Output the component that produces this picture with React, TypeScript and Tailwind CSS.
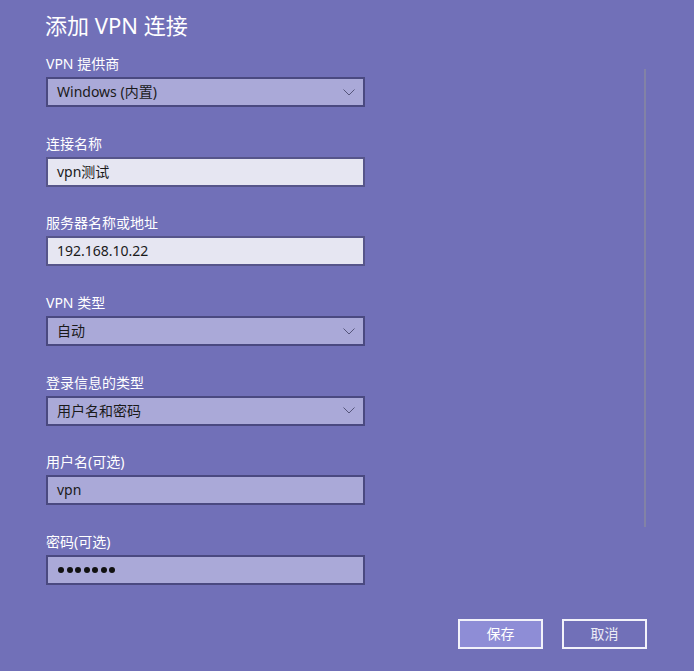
import React from "react";

const font = { fontFamily: '"Noto Sans", "Noto Sans CJK SC", sans-serif' };

function Chevron() {
  return (
    <svg width="12" height="7" viewBox="0 0 12 7" className="shrink-0">
      <path d="M0.5 0.5 L6 6 L11.5 0.5" fill="none" stroke="#55557a" strokeWidth="1" />
    </svg>
  );
}

function Label({ children }: { children: React.ReactNode }) {
  return <div className="h-[20px] leading-[20px] text-[14px] text-white">{children}</div>;
}

function Select({ value }: { value: string }) {
  return (
    <div className="mt-[3px] h-[30px] w-[319px] border-2 border-[#4a4980] bg-[#aaa9d8] flex items-center justify-between pl-[9px] pr-[8px]">
      <span className="text-[14px] text-[#1a1a1a] leading-none">{value}</span>
      <Chevron />
    </div>
  );
}

function Input({ value, light, dots }: { value: string; light?: boolean; dots?: boolean }) {
  return (
    <div
      className={
        "mt-[3px] h-[30px] w-[319px] border-2 flex items-center pl-[10px] " +
        (light ? "border-[#56558a] bg-[#e6e6f2]" : "border-[#4a4980] bg-[#aaa9d8]")
      }
    >
      {dots ? (
        <div className="flex gap-[2.5px]">
          {[0, 1, 2, 3, 4, 5, 6].map((i) => (
            <span key={i} className="w-[6px] h-[6px] rounded-full bg-[#111]" />
          ))}
        </div>
      ) : (
        <span className="text-[14px] text-[#1a1a1a] leading-none -ml-[1px]">{value}</span>
      )}
    </div>
  );
}

export default function App() {
  return (
    <div className="relative w-[694px] h-[671px] bg-[#7170b8] overflow-hidden" style={font}>
      <div className="flex flex-col pl-[46px] pt-[10px]">
        <div className="h-[30px] leading-[30px] text-[22px] text-white -ml-[1px]">添加 VPN 连接</div>
        <div className="flex flex-col gap-[26.7px] mt-[14px]">
          <div>
            <Label>VPN 提供商</Label>
            <Select value="Windows (内置)" />
          </div>
          <div>
            <Label>连接名称</Label>
            <Input value="vpn测试" light />
          </div>
          <div>
            <Label>服务器名称或地址</Label>
            <Input value="192.168.10.22" light />
          </div>
          <div>
            <Label>VPN 类型</Label>
            <Select value="自动" />
          </div>
          <div>
            <Label>登录信息的类型</Label>
            <Select value="用户名和密码" />
          </div>
          <div>
            <Label>用户名(可选)</Label>
            <Input value="vpn" />
          </div>
          <div>
            <Label>密码(可选)</Label>
            <Input value="" dots />
          </div>
        </div>
      </div>
      <div className="flex justify-end gap-[19px] pr-[47px] mt-[34px]">
        <button className="w-[85px] h-[30px] border-2 border-[#f2f2fa] bg-[#8e8dd6] text-white text-[14px] leading-none">保存</button>
        <button className="w-[85px] h-[30px] border-2 border-[#f2f2fa] bg-[#7170b8] text-[#ececf6] text-[14px] leading-none">取消</button>
      </div>
      <div className="absolute left-[644px] top-[69px] w-[2px] h-[458px] bg-[#8282a6]" />
    </div>
  );
}
